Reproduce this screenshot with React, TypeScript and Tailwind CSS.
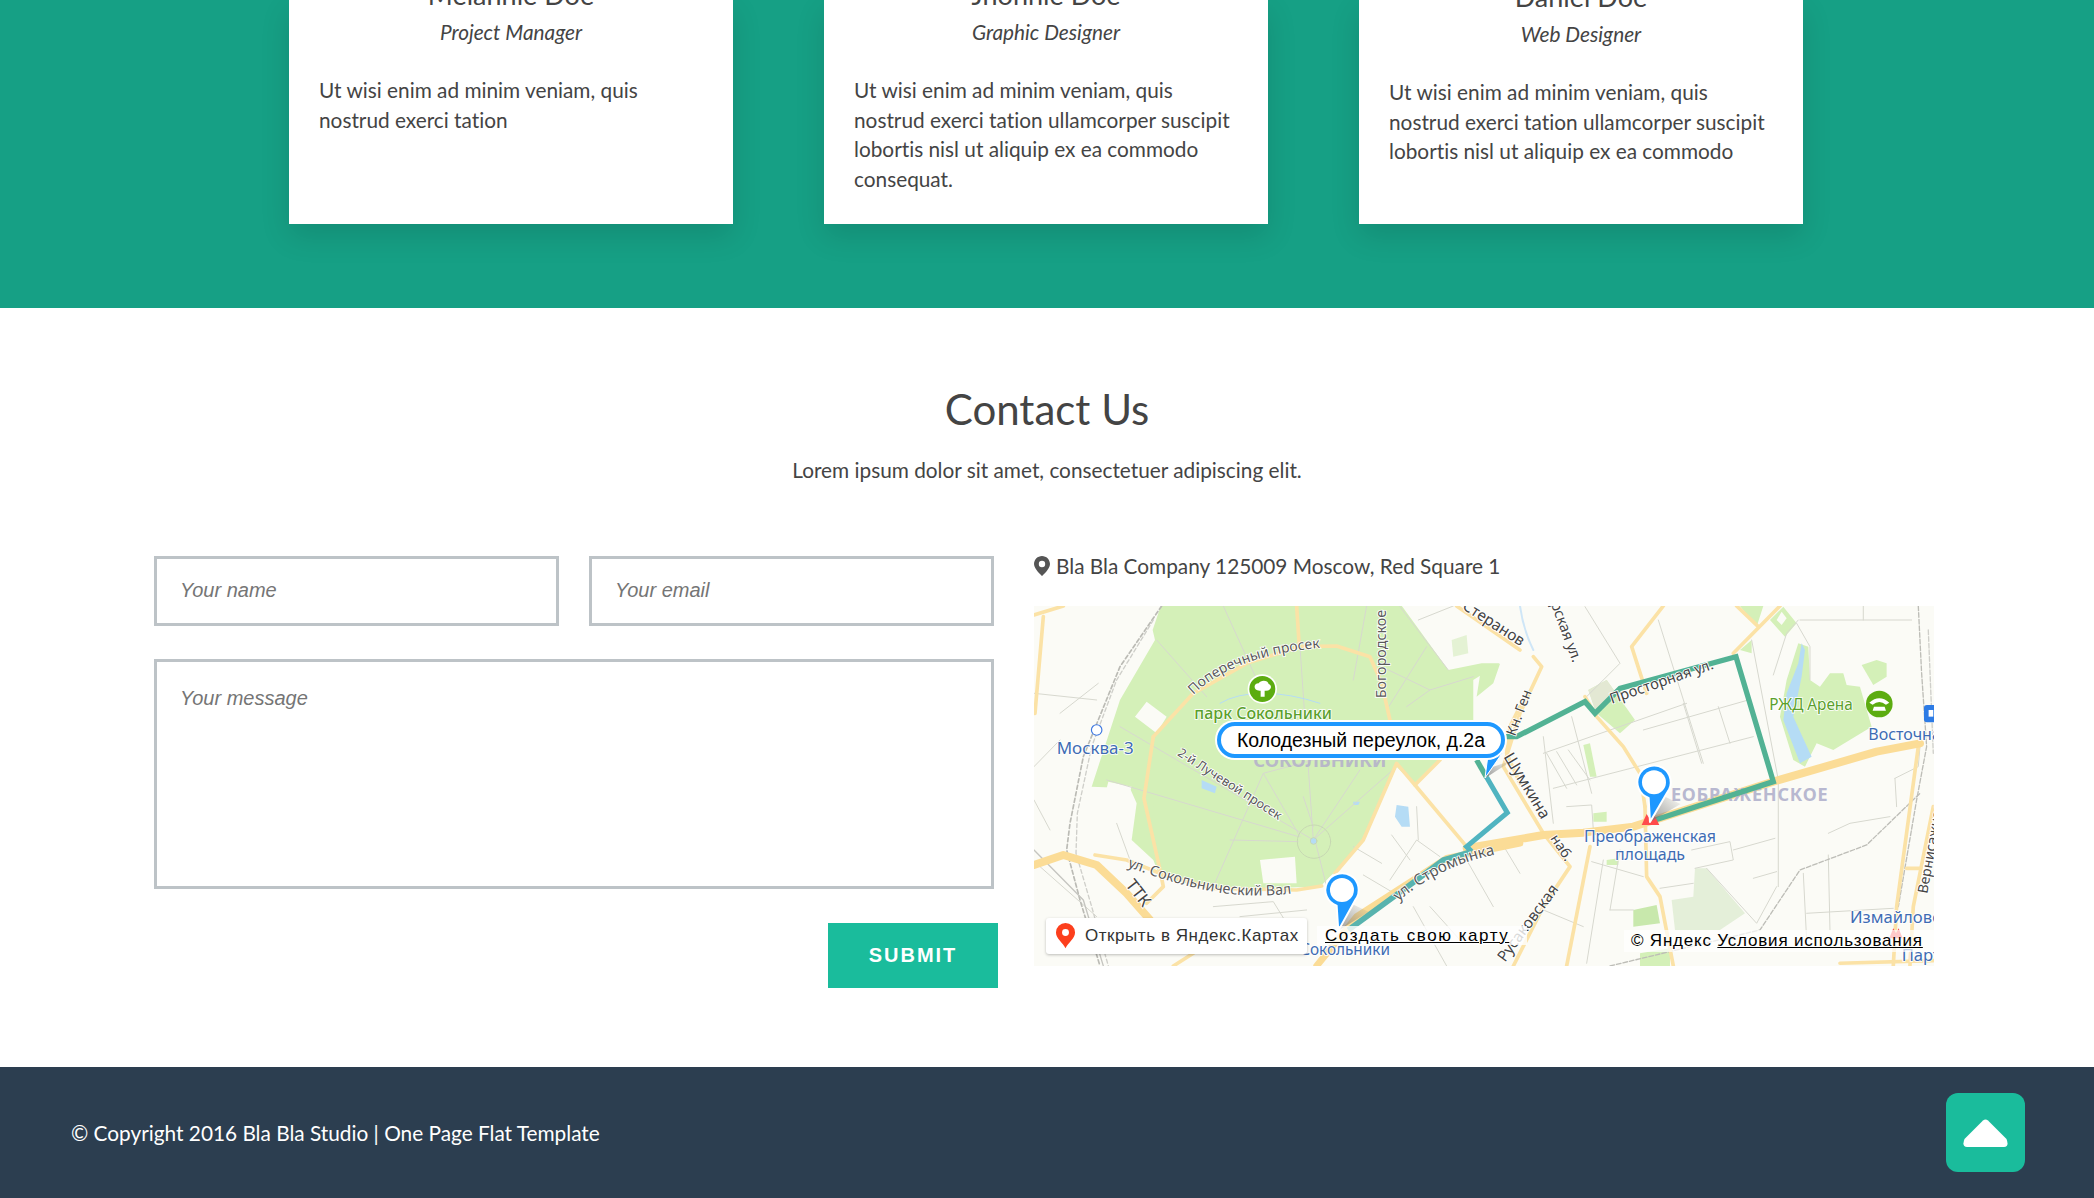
// map is traced in 3x coordinates, so each side keeps its own group transform
const leftPark =
  "M425 190 L398 270 L405 300 L300 480 L215 740 L330 745 L350 790 L335 900 L400 960 L420 1010 L580 1050 L830 1042 L900 1040 L950 990 L1030 900 L1130 680 L1185 735 L1360 560 L1360 420 L1440 370 L1385 370 L1285 390 L1140 190 Z";
const leftStreets = [
  "M840 320 L880 900", "M610 198 L720 440", "M410 300 L560 470", "M1040 198 L1000 420", "M300 560 L880 900",
  "M260 720 L835 890", "M630 900 L835 905", "M580 1040 L730 700 L880 660", "M730 700 L840 890", "M880 900 L1130 680",
  "M880 900 L1020 690", "M850 770 L880 860", "M885 900 L925 1060", "M1085 380 L1230 450 L1360 410", "M1285 390 L1140 200",
  "M1160 500 L1230 450", "M1100 510 L1220 320", "M1195 240 L1300 198", "M42 460 L230 480", "M42 680 L120 600", "M120 520 L235 430",
  "M42 780 L90 870", "M290 850 L330 960", "M230 1130 L60 980", "M1000 920 L1085 970", "M1115 885 L1170 960", "M1110 1020 L1190 900 L1260 950",
  "M1030 1005 L1140 1070", "M1230 1100 L1320 1200", "M1180 1100 L1280 1278", "M1340 960 L1420 1100", "M580 1100 L760 1085 L800 1150", "M660 1130 L860 1110",
  "M1440 900 L1500 1000", "M1190 800 L1195 900",
];
const leftRoads = [
  "M830 198 L838 320", "M400 590 L520 460 L680 370 L840 320 L950 318 L1050 350 L1085 430 L1110 540",
  "M400 590 L372 775 L420 990 L430 1040 L380 1090", "M225 945 L320 960 L420 1000 L580 1045 L830 1050 L905 1038",
  "M945 1000 L1030 900 L1130 670 L1185 735 L1340 920", "M1185 735 L1260 660", "M70 230 L45 520", "M42 225 L130 198",
  "M1500 500 L1470 560 L1460 640 L1500 730", "M1310 198 L1500 330", "M460 1278 L520 1240",
];
const rightStreets = [
  "M255 200 L360 370 L260 470", "M475 240 L610 670", "M130 640 L560 490", "M160 745 L760 590", "M430 570 L745 480",
  "M140 640 L200 745", "M170 635 L230 735", "M205 630 L270 720", "M130 590 L160 850", "M215 530 L275 760", "M655 500 L690 610", "M550 490 L605 670",
  "M755 300 L835 720 L835 1040", "M900 240 L1235 240", "M895 240 L860 280 L820 405", "M890 250 L930 320 L930 420", "M575 930 L690 905 L700 960 L585 985",
  "M700 930 L825 895", "M760 1015 L830 995", "M620 985 L770 1150 L830 1040", "M480 1045 L580 1030", "M920 1120 L1180 1105", "M985 945 L990 1170",
  "M910 1000 L920 1200", "M1185 715 L1255 680 L1260 620", "M1185 715 L1190 800", "M985 880 L1050 850 L1170 830", "M200 800 L275 795 L280 870", "M275 965 L430 1010",
  "M310 960 L260 1270", "M360 930 L330 1110", "M330 1110 L400 1110", "M130 1110 L250 1160", "M1090 198 L1090 240",
];
const rightRoads = [
  "M490 198 L395 320 L440 460", "M255 470 L290 530 L370 620 L420 700 L435 800", "M435 800 L440 1010 L480 1070 L520 1278",
  "M840 198 L700 340", "M710 198 L775 260", "M1255 620 L1190 1100 L1180 1278", "M1300 800 L1240 1100 L1230 1278",
  "M100 350 L125 380 L60 520 L10 680 L130 880 L210 980 L130 1100 L40 1278", "M270 920 L200 1278", "M1020 1270 L1300 1262", "M1220 985 L1260 985",
];

function Pin({ x, y, tipX, tipY }: { x: number; y: number; tipX: number; tipY: number }) {
  return (
    <g>
      <polygon points={`${tipX},${tipY} ${x + 30},${y + 42} ${x + 80},${y + 65}`} fill="url(#pinShadow)" />
      <path
        d={`M${tipX} ${tipY} L${x + 40} ${y + 30} A50 50 0 1 0 ${x - 16} ${y + 47} Z`}
        fill="#1e98ff"
        stroke="#ffffff"
        strokeWidth="6"
        strokeLinejoin="round"
      />
      <circle cx={x} cy={y} r="36" fill="#ffffff" />
    </g>
  );
}

function MapArt() {
  return (
    <svg viewBox="0 0 900 360" className="block h-[360px] w-[900px]">
      <defs>
        <linearGradient id="pinShadow" x1="0" y1="1" x2="1" y2="0">
          <stop offset="0" stopColor="#777777" stopOpacity="0.75" />
          <stop offset="1" stopColor="#777777" stopOpacity="0" />
        </linearGradient>
        <path id="t-poper" d="M520 465 Q640 345 915 322" />
        <path id="t-luch" d="M470 645 L790 850" />
        <path id="t-val" d="M322 980 Q480 1040 600 1058 T830 1058" />
        <path id="t-strom" d="M1135 1085 Q1280 960 1480 935" />
        <path id="t-prost" d="M335 492 L660 380" />
        <path id="t-bog" d="M100 50 L250 455" />
        <path id="t-rus" d="M15 1268 L190 1030" />
        <path id="t-nab" d="M150 895 L215 995" />
        <path id="t-shum" d="M10 650 L125 840" />
        <path id="t-gen" d="M45 590 L105 430" />
      </defs>
      <rect width="900" height="360" fill="#fbfbf6" />

      {/* left half */}
      <g transform="translate(-14 -66) scale(0.3333)" fill="none" strokeLinecap="round" strokeLinejoin="round">
        <path d={leftPark} fill="#d4f0b8" />
        <path d="M345 530 L380 485 L440 530 L410 580 Z M720 960 L825 950 L830 1030 L730 1030 Z M265 725 L335 740 L325 765 L260 745 Z" fill="#fbfbf6" />
        <path d="M1385 375 L1440 372 L1420 430 L1370 470 Z M355 780 L400 790 L395 880 L345 900 Z" fill="#d4f0b8" />
        <path d="M1295 300 L1340 285 L1345 340 L1300 350 Z" fill="#e4f2d4" />
        <path d="M545 720 L590 740 L585 760 L545 745 Z" fill="#b5dcf5" />
        <path d="M1130 795 L1165 800 L1170 860 L1145 860 L1125 830 Z M1000 785 L1020 785 L1015 795 L1000 795 Z" fill="#b5dcf5" />
        {leftStreets.map((d) => (
          <path key={d} d={d} stroke="#d7d8cf" strokeWidth="3" />
        ))}
        <circle cx="882" cy="905" r="50" stroke="#c7d8b3" strokeWidth="3" />
        <circle cx="881" cy="903" r="10" fill="#b5dcf5" stroke="#c7d8b3" strokeWidth="3" />
        <path d="M425 198 L300 380 L190 650 L150 850 L140 930 L180 1080 L240 1278" stroke="#bbbbb5" strokeWidth="5" strokeDasharray="12 8" />
        <path d="M400 240 L290 420 L215 620 L172 820 L168 940 L215 1100 L265 1278" stroke="#cfcfca" strokeWidth="4" strokeDasharray="12 8" />
        <path d="M42 930 L190 1080 L250 1278" stroke="#c5c5c0" strokeWidth="4" />
        <path d="M600 490 Q650 460 730 460 T900 490" stroke="#b5dcf5" strokeWidth="3" />
        {leftRoads.map((d) => (
          <path key={d} d={d} stroke="#fbe2a6" strokeWidth="11" />
        ))}
        <path d="M42 975 L130 945 L230 975 L320 1060 L390 1140" stroke="#fbdc96" strokeWidth="24" />
        <path d="M890 1278 L1010 1130 L1180 1020 L1280 955 L1500 910" stroke="#fbdc96" strokeWidth="20" />
      </g>

      {/* right half */}
      <g transform="translate(466 -66) scale(0.3333)" fill="none" strokeLinecap="round" strokeLinejoin="round">
        <path d="M60 198 Q70 270 100 330" stroke="#cfe6f7" strokeWidth="6" />
        <path d="M265 450 L320 420 L345 455 L405 540 L360 580 L290 520 Z" fill="#d4f0b8" />
        <path d="M265 450 L320 420 L345 455 L285 510 Z" fill="#e3e8d3" />
        <path d="M250 615 L270 610 L290 710 L270 710 Z M280 820 L320 815 L320 845 L280 845 Z" fill="#d4f0b8" />
        <path d="M720 198 L790 198 L770 260 Z M810 240 L850 200 L890 250 L855 290 Z M720 330 L755 300 L755 340 Z" fill="#d4f0b8" />
        <path d="M830 240 L845 215 L860 235 L845 255 Z" fill="#fbfbf6" />
        <path d="M895 310 L925 320 L930 420 L960 440 L990 400 L1030 400 L1040 435 L1080 440 L1115 560 L1000 630 L950 610 L915 680 L880 660 L840 530 L860 420 Z" fill="#d4f0b8" />
        <path d="M1085 375 L1130 360 L1160 370 L1160 410 L1120 435 Z" fill="#d4f0b8" />
        <path d="M905 310 L915 330 L905 410 L880 530 L935 650 L900 670 L850 540 L860 460 L895 370 Z" fill="#b5dcf5" />
        <path d="M515 1080 L580 1070 L585 985 L620 985 L735 1120 L660 1170 L525 1170 Z" fill="#e4efd9" />
        <path d="M400 1110 L470 1095 L480 1150 L400 1160 Z" fill="#c8e8ac" />
        <path d="M320 960 L355 955 L355 975 L320 975 Z M420 1240 L510 1225 L510 1278 L420 1278 Z" fill="#d4f0b8" />
        {rightStreets.map((d) => (
          <path key={d} d={d} stroke="#d7d8cf" strokeWidth="3" />
        ))}
        <path d="M330 1278 L780 1170 L900 990 L1100 915 L1260 760" stroke="#bdbdb7" strokeWidth="4" strokeDasharray="14 6" />
        <path d="M1255 198 L1265 400 L1280 620 L1250 780 L1195 1100" stroke="#bdbdb7" strokeWidth="4" strokeDasharray="14 6" />
        <path d="M1285 270 L1300 640" stroke="#cfcfca" strokeWidth="4" strokeDasharray="14 6" />
        {rightRoads.map((d) => (
          <path key={d} d={d} stroke="#fbe2a6" strokeWidth="11" />
        ))}
        <path d="M-100 925 L130 885 L250 878 L400 860 L820 725 L1130 635 L1260 610" stroke="#fbdc96" strokeWidth="24" />
      </g>

      {/* district name goes under the route */}
      <g transform="translate(466 -66) scale(0.3333)" className="font-['Noto_Sans',sans-serif]">
        <text fontSize="54" letterSpacing="2.300" fill="#b8b8d0" x="985" y="784" textAnchor="end" fontWeight="700">ЕОБРАЖЕНСКОЕ</text>
      </g>

      {/* route */}
      <g transform="translate(466 -66) scale(0.3333)" fill="none" strokeLinejoin="miter">
        <path d="M-70 660 L-40 590 L50 590 L255 485 L285 520 L360 445 L708 350 L820 725 L465 840" stroke="#52b294" strokeWidth="16" />
      </g>
      <g transform="translate(-14 -66) scale(0.3333)" fill="none" strokeLinejoin="miter">
        <path d="M1370 660 L1400 712" stroke="#52b294" strokeWidth="16" />
        <path d="M1400 712 L1462 818 L1340 920 L1355 935" stroke="#50b4c0" strokeWidth="15" />
        <path d="M1355 935 L1270 960 L1190 1020 L985 1170" stroke="#58b3ae" strokeWidth="17" />
      </g>

      {/* left labels */}
      <g transform="translate(-14 -66) scale(0.3333)" className="font-['Noto_Sans',sans-serif]" stroke="#ffffff" strokeWidth="5" paintOrder="stroke">
        <text fontSize="42" fill="#5a5a5a"><textPath href="#t-poper">Поперечный просек</textPath></text>
        <text fontSize="43" fill="#5a5a5a" transform="translate(1098 475) rotate(-90)">Богородское</text>
        <text fontSize="46" fill="#444444" transform="translate(1325 205) rotate(33)">Стеранов</text>
        <text fontSize="48" fill="#5aa02c" x="523" y="538" fontWeight="500">парк Сокольники</text>
        <text fontSize="51" fill="#3e6cb3" x="110" y="642">Москва-3</text>
        <text fontSize="55" fill="#b8b8c8" stroke="none" x="700" y="682" fontWeight="700">СОКОЛЬНИКИ</text>
        <text fontSize="38" fill="#5a5a5a"><textPath href="#t-luch">2-й Лучевой просек</textPath></text>
        <text fontSize="43" fill="#5a5a5a"><textPath href="#t-val">ул. Сокольнический Вал</textPath></text>
        <text fontSize="50" fill="#444444" transform="translate(315 1035) rotate(52)">ТТК</text>
        <text fontSize="46" fill="#5a5a5a"><textPath href="#t-strom">ул. Стромынка</textPath></text>
        <text fontSize="46" fill="#3e6cb3" x="1110" y="1244" textAnchor="end">Сокольники</text>
        <circle cx="230" cy="570" r="14" fill="#ffffff" stroke="#3e78e0" strokeWidth="7" />
        <circle cx="727" cy="447" r="44" fill="#ffffff" stroke="none" />
        <circle cx="727" cy="447" r="39" fill="#5cac10" stroke="none" />
        <path d="M722 470 L722 452 C700 455 698 430 716 430 C722 418 745 420 746 432 C758 436 755 455 734 452 L734 470 Z" fill="#ffffff" stroke="none" />
      </g>

      {/* right labels */}
      <g transform="translate(466 -66) scale(0.3333)" className="font-['Noto_Sans',sans-serif]" stroke="#ffffff" strokeWidth="5" paintOrder="stroke">
        <text fontSize="44" fill="#444444"><textPath href="#t-prost">Просторная ул.</textPath></text>
        <text fontSize="44" fill="#444444"><textPath href="#t-bog">Богатырская ул.</textPath></text>
        <text fontSize="46" fill="#444444"><textPath href="#t-rus">Русаковская</textPath></text>
        <text fontSize="42" fill="#444444"><textPath href="#t-nab">наб.</textPath></text>
        <text fontSize="48" fill="#444444"><textPath href="#t-shum">Шумкина</textPath></text>
        <text fontSize="42" fill="#444444"><textPath href="#t-gen">Кн. Ген</textPath></text>
        <text fontSize="46" fill="#5aa02c" x="808" y="510">РЖД Арена</text>
        <text fontSize="48" fill="#3e6cb3" x="1105" y="600">Восточная</text>
        <text fontSize="48" fill="#3e6cb3" x="450" y="905" textAnchor="middle">Преображенская</text>
        <text fontSize="48" fill="#3e6cb3" x="450" y="960" textAnchor="middle">площадь</text>
        <text fontSize="50" fill="#3e6cb3" x="1050" y="1148">Измайлово</text>
        <text fontSize="50" fill="#3e6cb3" x="1205" y="1262">Партизанская</text>
        <text fontSize="42" fill="#444444" transform="translate(1282 1062) rotate(-80)">Вернисажная</text>
        <path d="M425 855 L440 822 L451 840 L462 822 L478 855 Z M1168 1195 L1180 1165 L1188 1180 L1196 1165 L1208 1195 Z" fill="#ff4b4b" stroke="none" />
        <circle cx="1138" cy="492" r="40" fill="#5cac10" stroke="none" />
        <path d="M1108 488 Q1138 462 1168 488 L1158 494 Q1138 478 1118 494 Z M1122 500 L1154 500 L1158 512 L1118 512 Z" fill="#ffffff" stroke="none" />
        <rect x="1272" y="495" width="40" height="52" rx="9" fill="#2d7be5" stroke="none" />
        <rect x="1286" y="510" width="14" height="20" fill="#ffffff" stroke="none" />
      </g>

      {/* pins */}
      <g transform="translate(-14 -66) scale(0.3333)">
        <polygon points="1395,715 1420,680 1480,660" fill="url(#pinShadow)" />
        <Pin x={966} y={1050} tipX={955} tipY={1172} />
      </g>
      <g transform="translate(466 -66) scale(0.3333)">
        <Pin x={462} y={727} tipX={450} tipY={846} />
      </g>
    </svg>
  );
}

function MapBlock() {
  return (
    <div className="relative h-[360px] w-[900px] overflow-hidden">
      <MapArt />
      {/* balloon */}
      <svg className="absolute left-[445px] top-[140px] h-[34px] w-[26px]" viewBox="0 0 26 34">
        <path d="M9 9 L6 32 L24 6 Z" fill="#1e98ff" stroke="#ffffff" strokeWidth="1" strokeLinejoin="round" />
      </svg>
      <div className="absolute left-[183px] top-[116px] flex h-[36px] w-[288px] items-center justify-center rounded-[18px] border-[4px] border-[#1e98ff] bg-white pt-[1px] font-['Liberation_Sans',sans-serif] text-[19.5px] text-black shadow-[0_0_0_2px_#ffffff]">
        Колодезный переулок, д.2а
      </div>
      {/* open in maps */}
      <div className="absolute left-[12px] top-[312px] flex h-[36px] w-[261px] items-center rounded-[3px] bg-white pl-[9px] font-['Liberation_Sans',sans-serif] text-[17px] text-[#333] shadow-[0_1px_3px_rgba(0,0,0,0.25)]">
        <svg viewBox="0 0 24 30" className="mr-[9px] h-[26px] w-[21px]">
          <path d="M12 29 C9 23 1 18 1 11 A11 11 0 0 1 23 11 C23 18 15 23 12 29 Z" fill="#fc3f1d" />
          <circle cx="12" cy="11" r="4" fill="#ffffff" />
        </svg>
        <span className="tracking-[0.55px]">Открыть в Яндекс.Картах</span>
      </div>
      <div className="absolute left-[283px] top-[320px] h-[19px] w-[210px] whitespace-nowrap bg-white/80 pl-[8px] font-['Liberation_Sans',sans-serif] text-[17px] leading-[19px] tracking-[1.55px] text-black underline">
        Создать свою карту
      </div>
      <div className="absolute bottom-[14px] right-0 h-[22px] w-[310px] whitespace-nowrap bg-white/70 pl-[7px] font-['Liberation_Sans',sans-serif] text-[17px] leading-[22px] tracking-[0.8px] text-black">
        © Яндекс <span className="underline">Условия использования</span>
      </div>
    </div>
  );
}

function TeamCard({ name, role, text, shift }: { name: string; role: string; text: string; shift?: boolean }) {
  return (
    <div className={`h-[224px] bg-white text-center shadow-[0_12px_28px_rgba(0,0,0,0.12)] ${shift ? "pt-[2px]" : ""}`}>
      <div className="-mt-[20px] text-[27px] leading-[30px] text-[#444]">{name}</div>
      <div className="mt-[7px] text-[20.8px] italic leading-[30px] text-[#444]">{role}</div>
      <p className="mt-[28px] px-[30px] text-left text-[20.8px] leading-[29.7px] text-[#444]">{text}</p>
    </div>
  );
}

function App() {
  return (
    <div className="h-[1198px] overflow-hidden bg-white font-['Lato',sans-serif] text-[#444] [font-variant-ligatures:none]">
      <section className="h-[308px] bg-[#16a085]">
        <div className="mx-auto grid w-[1514px] -translate-x-px grid-cols-3 gap-[91px]">
          <TeamCard name="Melannie Doe" role="Project Manager" text="Ut wisi enim ad minim veniam, quis nostrud exerci tation" />
          <TeamCard name="Jhonnie Doe" role="Graphic Designer" text="Ut wisi enim ad minim veniam, quis nostrud exerci tation ullamcorper suscipit lobortis nisl ut aliquip ex ea commodo consequat." />
          <TeamCard shift name="Daniel Doe" role="Web Designer" text="Ut wisi enim ad minim veniam, quis nostrud exerci tation ullamcorper suscipit lobortis nisl ut aliquip ex ea commodo" />
        </div>
      </section>

      <section className="h-[759px] pt-[75px]">
        <h2 className="text-center text-[42px] leading-[52px]">Contact Us</h2>
        <p className="mt-[20px] text-center text-[20.8px] leading-[30px]">Lorem ipsum dolor sit amet, consectetuer adipiscing elit.</p>

        <div className="mt-[71px] flex gap-[36px] pl-[154px]">
          <form className="flex w-[844px] flex-col">
            <div className="flex w-[840px] gap-[30px]">
              <input
                placeholder="Your name"
                className="h-[70px] w-[405px] border-[3px] border-[#bdc3c7] px-[23px] pb-[2px] font-['Liberation_Sans',sans-serif] text-[20px] italic placeholder:text-[#757575]"
              />
              <input
                placeholder="Your email"
                className="h-[70px] w-[405px] border-[3px] border-[#bdc3c7] px-[23px] pb-[2px] font-['Liberation_Sans',sans-serif] text-[20px] italic placeholder:text-[#757575]"
              />
            </div>
            <textarea
              placeholder="Your message"
              className="mt-[33px] block h-[230px] w-[840px] resize-none border-[3px] border-[#bdc3c7] px-[23px] pt-[21px] font-['Liberation_Sans',sans-serif] text-[20px] italic placeholder:text-[#757575]"
            />
            <button
              type="button"
              className="mt-[34px] h-[65px] w-[170px] self-end bg-[#1abc9c] pb-[2px] font-['Liberation_Sans',sans-serif] text-[20px] font-bold tracking-[2px] text-white"
            >
              SUBMIT
            </button>
          </form>

          <div className="w-[900px]">
            <div className="flex h-[20px] items-center gap-[6px] text-[20.8px] leading-[20px]">
              <svg viewBox="0 0 16 20" className="h-[20px] w-[16px]">
                <path fillRule="evenodd" d="M8 0 C3.600 0 0 3.600 0 8 C0 13 8 20 8 20 C8 20 16 13 16 8 C16 3.600 12.400 0 8 0 Z M8 4.800 A3.200 3.200 0 1 1 8 11.200 A3.200 3.200 0 1 1 8 4.800 Z" fill="#555555" />
              </svg>
              <span>Bla Bla Company 125009 Moscow, Red Square 1</span>
            </div>
            <div className="mt-[30px]">
              <MapBlock />
            </div>
          </div>
        </div>
      </section>

      <footer className="flex h-[131px] items-center justify-between bg-[#2c3e50] pl-[71px] pr-[69px] text-[20.8px] text-white">
        <span>© Copyright 2016 Bla Bla Studio | One Page Flat Template</span>
        <a className="flex h-[79px] w-[79px] items-center justify-center rounded-[12px] bg-[#1abc9c]">
          <svg viewBox="0 0 45 28" className="h-[28px] w-[45px]">
            <path d="M20 1.500 Q22.500 -0.500 25 1.500 L43.500 20 Q46.500 27.500 41 28 L4 28 Q-1.500 27.500 1.500 20 Z" fill="#ffffff" />
          </svg>
        </a>
      </footer>
    </div>
  );
}

export default App;
